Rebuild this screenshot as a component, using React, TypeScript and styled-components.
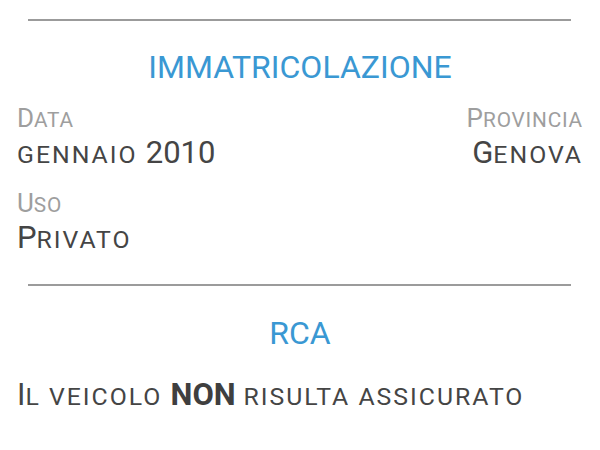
import React from "react";
import styled, { createGlobalStyle } from "styled-components";

const Global = createGlobalStyle`
  html, body { margin: 0; padding: 0; background: #ffffff; }
  body { font-family: Roboto, "Noto Sans", sans-serif; }
`;

const Page = styled.div`
  width: 600px;
  height: 450px;
  box-sizing: border-box;
  padding: 19px 17px 0 17px;
  display: flex;
  flex-direction: column;
  background: #ffffff;
`;

const Rule = styled.hr<{ $gap: number }>`
  margin: 0 12px ${(p) => p.$gap}px 11px;
  border: none;
  height: 2px;
  background: #9b9b9b;
`;

const SectionTitle = styled.h2<{ $gap: number }>`
  margin: 0 0 ${(p) => p.$gap}px 0;
  text-align: center;
  font-family: Roboto, sans-serif;
  font-weight: 400;
  font-size: 32px;
  line-height: 32px;
  color: #3a98d3;
`;

const FieldGrid = styled.div`
  display: grid;
  grid-template-columns: 1fr 1fr;
  row-gap: 22px;
  margin-bottom: 31px;
`;

const Field = styled.div<{ $align?: "left" | "right" }>`
  display: flex;
  flex-direction: column;
  gap: 6px;
  align-items: ${(p) => (p.$align === "right" ? "flex-end" : "flex-start")};
`;

const Label = styled.div`
  font-size: 26px;
  line-height: 26px;
  color: #9e9e9e;
  white-space: nowrap;
`;

const Value = styled.div`
  font-size: 31px;
  line-height: 31px;
  color: #454545;
  white-space: nowrap;
`;

const Small = styled.span<{ $spacing: number }>`
  font-size: 0.8em;
  line-height: 1;
  text-transform: uppercase;
  letter-spacing: ${(p) => p.$spacing}px;
`;

const Strong = styled.strong`
  font-weight: 700;
  color: #3f3f3f;
`;

function SmallCaps({ text, spacing = 2 }: { text: string; spacing?: number }) {
  const parts: React.ReactNode[] = [];
  let buf = "";
  let bufLower = false;
  const flush = (key: number) => {
    if (!buf) return;
    parts.push(
      bufLower ? (
        <Small key={key} $spacing={spacing}>{buf}</Small>
      ) : (
        <React.Fragment key={key}>{buf}</React.Fragment>
      )
    );
    buf = "";
  };
  Array.from(text).forEach((ch, i) => {
    const isLower = ch !== ch.toUpperCase();
    const lower = ch === " " ? bufLower : isLower;
    if (buf && lower !== bufLower) flush(i);
    bufLower = lower;
    buf += ch;
  });
  flush(text.length);
  return <>{parts}</>;
}

export default function App() {
  return (
    <>
      <Global />
      <Page>
        <Rule $gap={30} />
        <SectionTitle $gap={22}>IMMATRICOLAZIONE</SectionTitle>
        <FieldGrid>
          <Field>
            <Label><SmallCaps text="Data" spacing={0.8} /></Label>
            <Value><SmallCaps text="gennaio 2010" /></Value>
          </Field>
          <Field $align="right">
            <Label><SmallCaps text="Provincia" spacing={0.8} /></Label>
            <Value><SmallCaps text="Genova" /></Value>
          </Field>
          <Field>
            <Label><SmallCaps text="Uso" spacing={0.8} /></Label>
            <Value><SmallCaps text="Privato" /></Value>
          </Field>
        </FieldGrid>
        <Rule $gap={31} />
        <SectionTitle $gap={30}>RCA</SectionTitle>
        <Value>
          <SmallCaps text="Il veicolo " />
          <Strong>NON</Strong>
          <SmallCaps text=" risulta assicurato" />
        </Value>
      </Page>
    </>
  );
}
